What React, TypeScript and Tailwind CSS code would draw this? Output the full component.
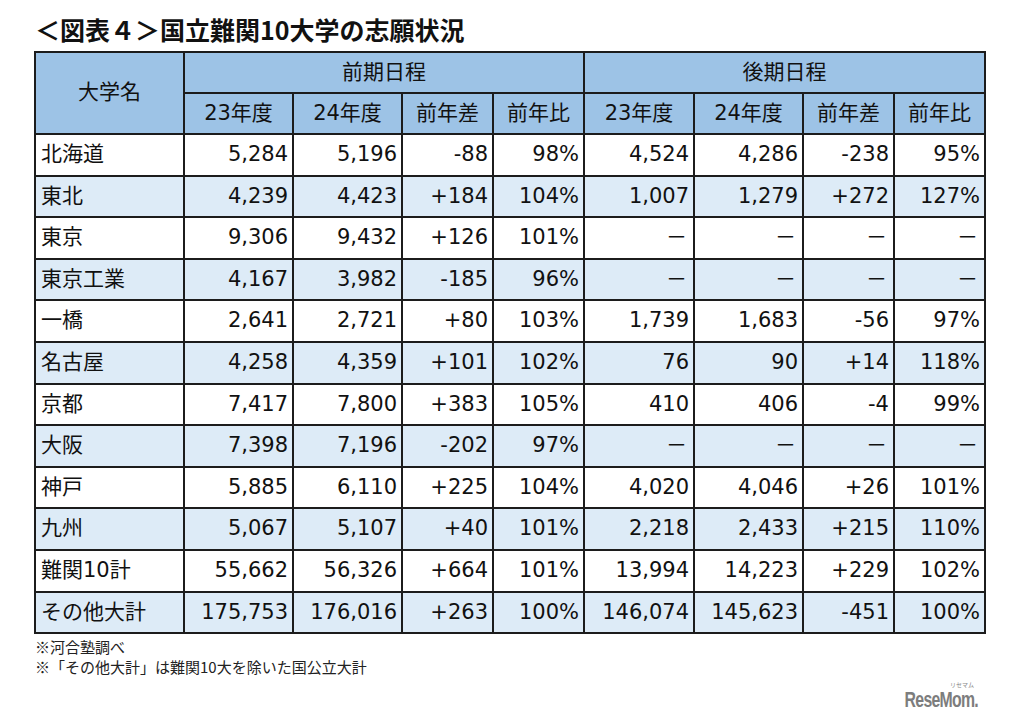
import React from "react";

const rows: string[][] = [
  ["北海道", "5,284", "5,196", "-88", "98%", "4,524", "4,286", "-238", "95%"],
  ["東北", "4,239", "4,423", "+184", "104%", "1,007", "1,279", "+272", "127%"],
  ["東京", "9,306", "9,432", "+126", "101%", "－", "－", "－", "－"],
  ["東京工業", "4,167", "3,982", "-185", "96%", "－", "－", "－", "－"],
  ["一橋", "2,641", "2,721", "+80", "103%", "1,739", "1,683", "-56", "97%"],
  ["名古屋", "4,258", "4,359", "+101", "102%", "76", "90", "+14", "118%"],
  ["京都", "7,417", "7,800", "+383", "105%", "410", "406", "-4", "99%"],
  ["大阪", "7,398", "7,196", "-202", "97%", "－", "－", "－", "－"],
  ["神戸", "5,885", "6,110", "+225", "104%", "4,020", "4,046", "+26", "101%"],
  ["九州", "5,067", "5,107", "+40", "101%", "2,218", "2,433", "+215", "110%"],
  ["難関10計", "55,662", "56,326", "+664", "101%", "13,994", "14,223", "+229", "102%"],
  ["その他大計", "175,753", "176,016", "+263", "100%", "146,074", "145,623", "-451", "100%"],
];

const widths = [
  "w-[149px]",
  "w-[109px]",
  "w-[109px]",
  "w-[91px]",
  "w-[91px]",
  "w-[110px]",
  "w-[109px]",
  "w-[91px]",
  "w-[91px]",
];

const sub = ["23年度", "24年度", "前年差", "前年比"];

const App = () => {
  return (
    <div className="w-[1026px] h-[728px] bg-white text-[#111] font-['DejaVu_Sans','Noto_Sans_CJK_JP',sans-serif] relative">
      <div className="pl-[35px] pt-[14px]">
        <h1 className="text-[25px] leading-[30px] font-bold font-['Noto_Sans_CJK_JP',sans-serif] text-[#111]">
          ＜図表４＞国立難関10大学の志願状況
        </h1>
      </div>

      <div className="pl-[34px] pt-[7px]">
        <table className="border-collapse table-fixed w-[950px] text-[21px]">
          <colgroup>
            {widths.map((w, i) => (
              <col key={i} className={w} />
            ))}
          </colgroup>
          <thead>
            <tr className="h-[41px] bg-[#9dc3e6]">
              <th
                rowSpan={2}
                className="border-2 border-[#1c1c1c] font-normal text-center"
              >
                大学名
              </th>
              <th colSpan={4} className="border-2 border-[#1c1c1c] font-normal text-center">
                前期日程
              </th>
              <th colSpan={4} className="border-2 border-[#1c1c1c] font-normal text-center">
                後期日程
              </th>
            </tr>
            <tr className="h-[41px] bg-[#9dc3e6]">
              {[...sub, ...sub].map((s, i) => (
                <th key={i} className="border-2 border-[#1c1c1c] font-normal text-center">
                  {s}
                </th>
              ))}
            </tr>
          </thead>
          <tbody>
            {rows.map((r, ri) => (
              <tr
                key={ri}
                className={
                  "h-[41.6px] " + (ri % 2 === 1 ? "bg-[#ddebf7]" : "bg-white")
                }
              >
                {r.map((c, ci) => (
                  <td
                    key={ci}
                    className={
                      ci === 0
                        ? "border-2 border-[#1c1c1c] text-left pl-[5px] whitespace-nowrap"
                        : c === "－"
                          ? "border-2 border-[#1c1c1c] text-right pr-[6px] whitespace-nowrap"
                          : "border-2 border-[#1c1c1c] text-right pr-[4px] whitespace-nowrap"
                    }
                  >
                    {c}
                  </td>
                ))}
              </tr>
            ))}
          </tbody>
        </table>
      </div>

      <div className="pl-[35px] pt-[3px] text-[15px] leading-[20px] font-['Noto_Sans_CJK_JP',sans-serif] text-[#222]">
        <p>※河合塾調べ</p>
        <p>※「その他大計」は難関10大を除いた国公立大計</p>
      </div>

      <div className="absolute right-[48px] top-[680px] flex flex-col items-end">
        <span className="text-[6px] leading-[9px] text-[#888] pr-[4px] font-['Noto_Sans_CJK_JP',sans-serif]">
          リセマム
        </span>
        <span className="text-[22px] leading-[22px] font-bold text-[#7d7d7d] tracking-[-1px] font-['Liberation_Sans',sans-serif] scale-x-[0.72] origin-right">
          ReseMom.
        </span>
      </div>
    </div>
  );
};

export default App;
